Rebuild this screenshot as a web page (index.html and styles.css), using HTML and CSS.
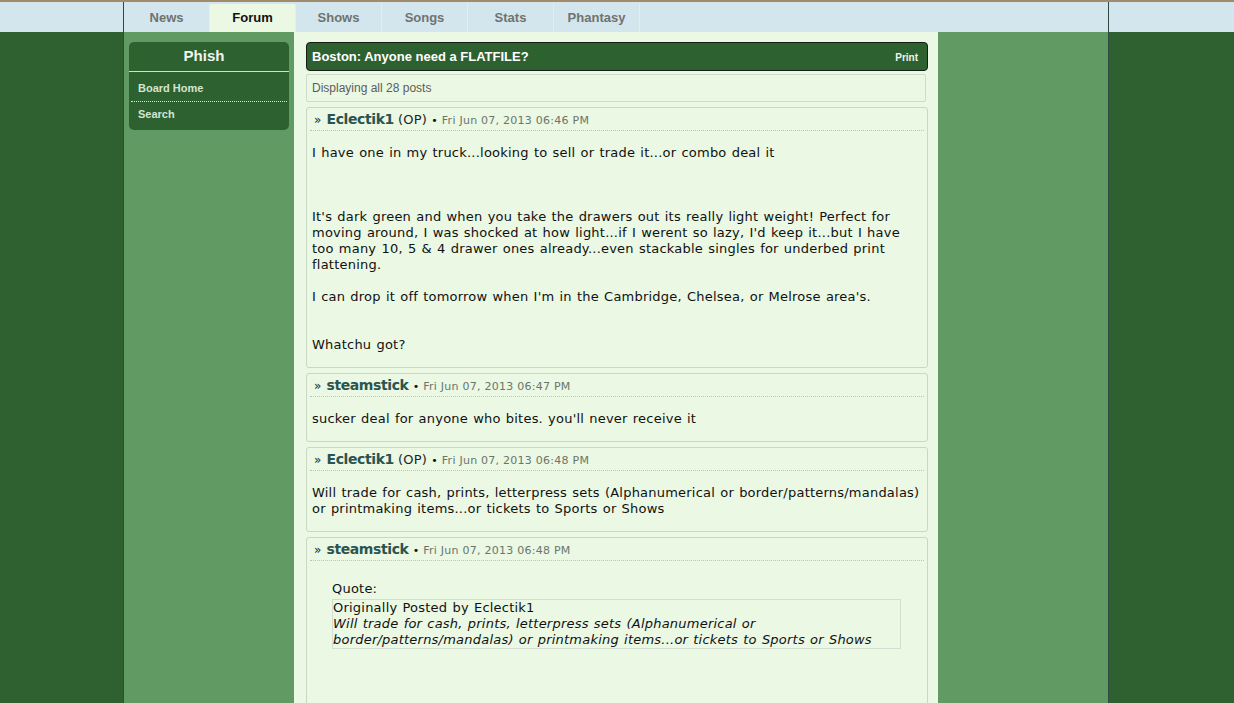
FILE: index.html
```html
<!DOCTYPE html>
<html lang="en">
<head>
<meta charset="utf-8">
<title>Boston: Anyone need a FLATFILE?</title>
<link rel="stylesheet" href="styles.css">
</head>
<body>
<div class="topline"></div>
<header class="navband">
  <nav class="shell nav">
    <a class="tab">News</a>
    <a class="tab active">Forum</a>
    <a class="tab">Shows</a>
    <a class="tab">Songs</a>
    <a class="tab">Stats</a>
    <a class="tab">Phantasy</a>
  </nav>
</header>
<div class="stage">
  <div class="shell frame">
    <aside class="sidebar">
      <div class="side-title">Phish</div>
      <ul class="side-list">
        <li>Board Home</li>
        <li>Search</li>
      </ul>
    </aside>
    <main class="content">
      <div class="thread-title">
        <span>Boston: Anyone need a FLATFILE?</span>
        <span class="print">Print</span>
      </div>
      <div class="count">Displaying all 28 posts</div>

      <article class="post">
        <div class="post-head"><span class="raquo">»</span> <span class="user">Eclectik1</span> <span class="op">(OP)</span> <span class="dot">•</span> <span class="date">Fri Jun 07, 2013 06:46 PM</span></div>
        <div class="post-body">I have one in my truck...looking to sell or trade it...or combo deal it<br><br><br><br>It's dark green and when you take the drawers out its really light weight! Perfect for moving around, I was shocked at how light...if I werent so lazy, I'd keep it...but I have too many 10, 5 &amp; 4 drawer ones already...even stackable singles for underbed print flattening.<br><br>I can drop it off tomorrow when I'm in the Cambridge, Chelsea, or Melrose area's.<br><br><br>Whatchu got?</div>
      </article>

      <article class="post">
        <div class="post-head"><span class="raquo">»</span> <span class="user">steamstick</span> <span class="dot">•</span> <span class="date">Fri Jun 07, 2013 06:47 PM</span></div>
        <div class="post-body">sucker deal for anyone who bites. you'll never receive it</div>
      </article>

      <article class="post">
        <div class="post-head"><span class="raquo">»</span> <span class="user">Eclectik1</span> <span class="op">(OP)</span> <span class="dot">•</span> <span class="date">Fri Jun 07, 2013 06:48 PM</span></div>
        <div class="post-body">Will trade for cash, prints, letterpress sets (Alphanumerical or border/patterns/mandalas) or printmaking items...or tickets to Sports or Shows</div>
      </article>

      <article class="post">
        <div class="post-head"><span class="raquo">»</span> <span class="user">steamstick</span> <span class="dot">•</span> <span class="date">Fri Jun 07, 2013 06:48 PM</span></div>
        <div class="post-body">
          <div class="quote">
            <div class="quote-label">Quote:</div>
            <div class="quote-box">
              <div>Originally Posted by Eclectik1</div>
              <div class="quote-text">Will trade for cash, prints, letterpress sets (Alphanumerical or border/patterns/mandalas) or printmaking items...or tickets to Sports or Shows</div>
            </div>
          </div>
          <br><br><br>
        </div>
      </article>
    </main>
  </div>
</div>
</body>
</html>
```

FILE: styles.css
```css
html, body {
  margin: 0;
  padding: 0;
}
body {
  height: 100vh;
  overflow: hidden;
  display: flex;
  flex-direction: column;
  background: #2f6130;
  font-family: "DejaVu Sans", Verdana, sans-serif;
}
.topline {
  height: 2px;
  background: #a08c6c;
  flex: none;
}
.shell {
  box-sizing: border-box;
  width: 986px;
  margin-left: calc(50% - 494px);
  border-left: 1px solid #2c4a42;
  border-right: 1px solid #2c4a42;
}
.navband {
  flex: none;
  height: 30px;
  background: #d3e5ed;
}
.nav {
  height: 30px;
  display: flex;
  align-items: flex-end;
}
.tab {
  box-sizing: border-box;
  width: 86px;
  height: 28px;
  border-right: 1px solid #e4eef2;
  display: flex;
  align-items: center;
  justify-content: center;
  padding-bottom: 2px;
  font-family: "Liberation Sans", Arial, sans-serif;
  font-weight: bold;
  font-size: 13px;
  color: #6e7370;
}
.tab.active {
  background: #eaf8e4;
  color: #111;
  border-radius: 2px 2px 0 0;
}
.stage {
  flex: 1;
  min-height: 0;
}
.frame {
  height: 100%;
  background: #619a62;
  display: flex;
  align-items: stretch;
  gap: 5px;
  padding-left: 5px;
}
.sidebar {
  align-self: flex-start;
  width: 160px;
  margin-top: 10px;
  background: #2e6130;
  border-radius: 5px;
  font-family: "Liberation Sans", Arial, sans-serif;
}
.side-title {
  height: 29px;
  line-height: 28px;
  text-align: center;
  padding-right: 10px;
  font-weight: bold;
  font-size: 15px;
  color: #eef5ec;
  border-bottom: 1px solid #cfe3c9;
}
.side-list {
  list-style: none;
  margin: 0 2px;
  padding: 4px 0 3px;
}
.side-list li {
  line-height: 25px;
  padding-left: 7px;
  font-size: 11px;
  font-weight: bold;
  color: #d3e4d1;
}
.side-list li + li {
  border-top: 1px dotted #d4e4d0;
}
.content {
  width: 644px;
  box-sizing: border-box;
  background: #eaf8e4;
  padding: 10px 10px 0 12px;
}
.thread-title {
  height: 29px;
  box-sizing: border-box;
  border: 1px solid #141d14;
  border-radius: 4px;
  background: #2e6130;
  display: flex;
  align-items: center;
  justify-content: space-between;
  padding: 0 9px 0 5px;
  font-family: "Liberation Sans", Arial, sans-serif;
  font-weight: bold;
  font-size: 13px;
  color: #fff;
}
.print {
  font-size: 10px;
  color: #eef3ee;
  padding-top: 2px;
}
.count {
  margin: 3px 2px 0 0;
  height: 28px;
  box-sizing: border-box;
  border: 1px solid #cfdccb;
  border-radius: 2px;
  line-height: 26px;
  padding-left: 5px;
  font-family: "Liberation Sans", Arial, sans-serif;
  font-size: 12px;
  color: #5b5e5a;
}
.post {
  margin-top: 5px;
  border: 1px solid #c9d8c5;
  border-radius: 3px;
}
.post-head {
  margin: 0 3px;
  height: 22px;
  line-height: 22px;
  padding-left: 4px;
  border-bottom: 1px dotted #b8c6b4;
  color: #111;
  font-size: 13px;
  white-space: nowrap;
}
.raquo {
  font-size: 12px;
  color: #1e2a26;
}
.user {
  font-weight: bold;
  font-size: 14px;
  letter-spacing: -0.4px;
  color: #2b5450;
  margin-left: 1px;
}
.op {
  color: #222;
  letter-spacing: 0.2px;
}
.dot {
  font-size: 11px;
}
.date {
  font-size: 11px;
  letter-spacing: 0.25px;
  color: #6b766b;
}
.post-body {
  padding: 14px 6px 14px 5px;
  font-size: 13px;
  line-height: 16px;
  letter-spacing: 0.22px;
  word-spacing: 0.8px;
  color: #111;
}
.quote {
  margin: 6px 20px 20px;
}
.quote-label {
  margin-bottom: 2px;
}
.quote-box {
  border: 1px solid #d2ded2;
  padding: 0;
}
.quote-text {
  font-style: italic;
}
```
